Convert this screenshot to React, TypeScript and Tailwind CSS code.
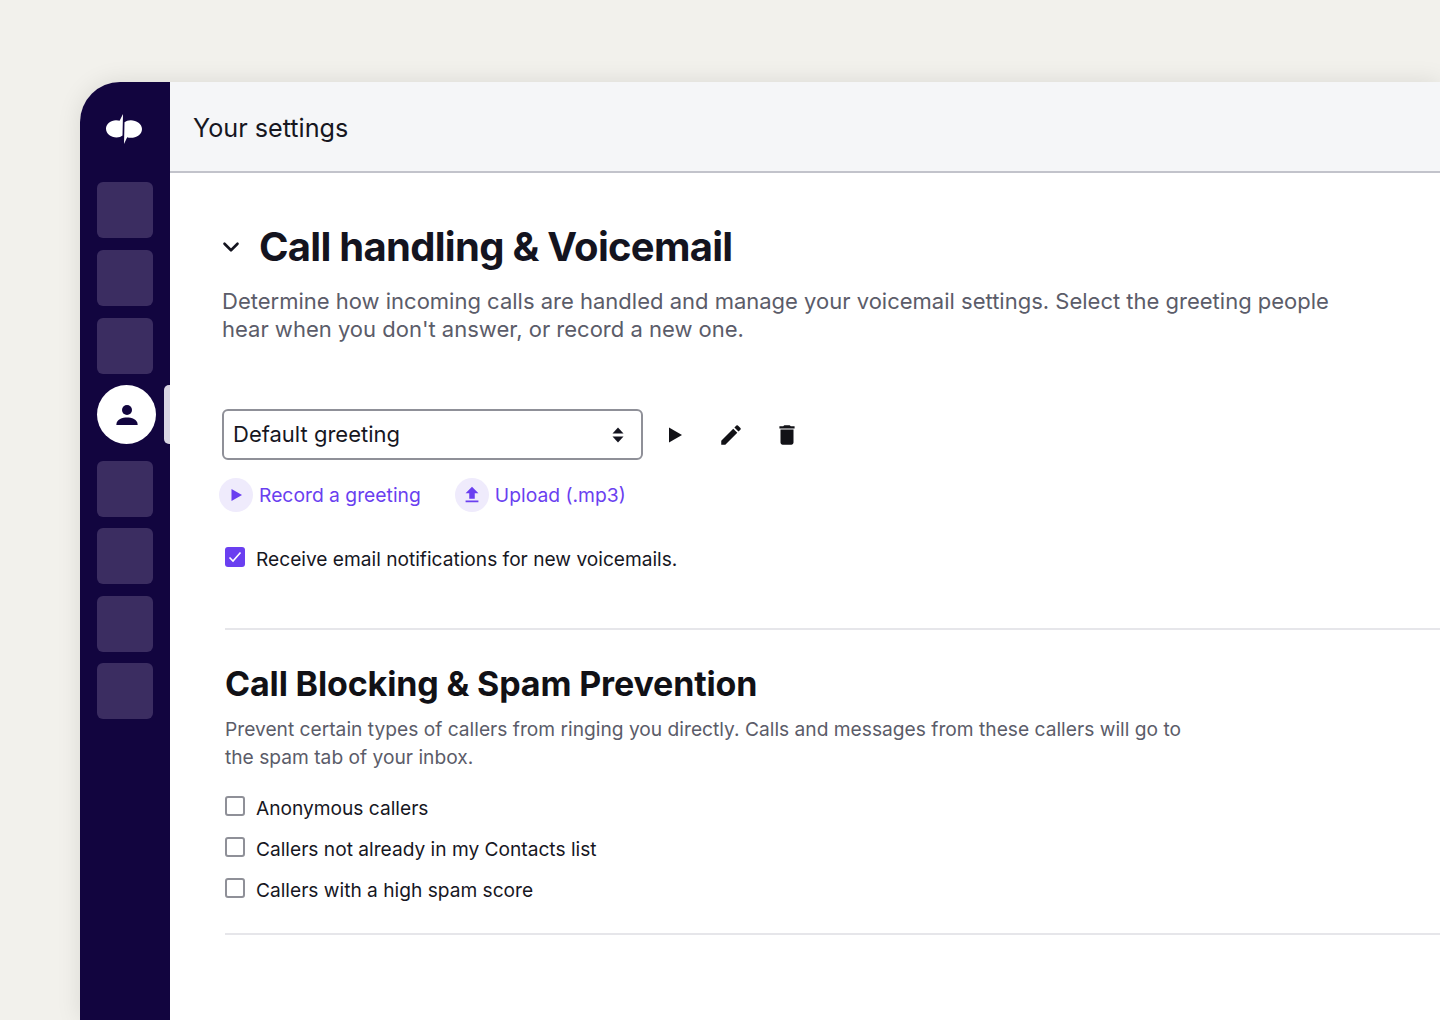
import React from 'react';
import { ChevronDown } from 'lucide-react';

const NavTile = () => <div className="w-[56px] h-[56px] rounded-[6px] bg-[#3b2d61]" />;

const Logo = () => (
  <svg width="38" height="32" viewBox="0 0 38 32" fill="#ffffff">
    <path d="M18 1 L17.5 22.5 C16 23.8 14.2 24.5 11.5 24.5 C6 24.5 1 21 1 15.8 C1 10.8 5.6 7.2 11 7.2 C12.6 7.2 13.8 7.5 14.6 7.8 Z" />
    <path d="M19 31 L19.5 9.2 C21.2 7.9 23 7.2 25.8 7.2 C31.5 7.2 37 10.8 37 16 C37 21.4 31.5 24.8 25.8 24.8 C24.4 24.8 23.2 24.6 22.2 24.2 Z" />
  </svg>
);

const CheckBox = ({ checked = false }: { checked?: boolean }) =>
  checked ? (
    <div className="w-[20px] h-[20px] rounded-[3px] bg-[#6a3ff0] flex items-center justify-center">
      <svg width="16" height="16" viewBox="0 0 16 16" fill="none" stroke="#ffffff" strokeWidth="1.6">
        <path d="M2.5 8.5 L6 12 L13.5 3.5" />
      </svg>
    </div>
  ) : (
    <div className="w-[20px] h-[20px] rounded-[3px] border-2 border-[#8f9098] bg-white" />
  );

const CheckRow = ({ label, checked }: { label: string; checked?: boolean }) => (
  <div className="flex items-center gap-[11px] h-[24px]">
    <CheckBox checked={checked} />
    <span className="text-[19.15px] leading-[24px] text-[#17171f] mt-[4px]">{label}</span>
  </div>
);

export default function App() {
  return (
    <div className="h-[1020px] w-[1440px] overflow-hidden bg-[#f2f1ec] pt-[82px] pl-[80px] font-['Inter',sans-serif]">
      <div className="flex h-[938px] rounded-tl-[40px] overflow-hidden shadow-[0_0_24px_rgba(0,0,0,0.10)]">
        {/* Sidebar */}
        <div className="w-[90px] shrink-0 bg-[#12053f] flex flex-col relative">
          <div className="h-[100px] flex items-center justify-center pr-[2px] pb-[7px] w-full">
            <Logo />
          </div>
          <div className="flex flex-col gap-[12px] pl-[17px]">
            <NavTile />
            <NavTile />
            <NavTile />
          </div>
          <div className="ml-[17px] mt-[11px] w-[59px] h-[59px] rounded-full bg-white flex items-center justify-center">
            <svg width="30" height="30" viewBox="0 0 24 24" fill="#12053f">
              <circle cx="12" cy="8" r="4" />
              <path d="M3.5 19.5 C3.5 15.5 8.5 14 12 14 C15.5 14 20.5 15.5 20.5 19.5 V20 H3.5 Z" />
            </svg>
          </div>
          <div className="mt-[17px] flex flex-col gap-[11.4px] pl-[17px]">
            <NavTile />
            <NavTile />
            <NavTile />
            <NavTile />
          </div>
          <div className="absolute right-0 top-[303px] w-[6px] h-[59px] rounded-l-[5px] bg-[#d9d6e3]" />
        </div>

        {/* Main */}
        <div className="flex-1 bg-white min-w-0">
          <div className="h-[91px] bg-[#f5f6f8] border-b-[2px] border-[#c2c3cb] flex items-center pl-[23px]">
            <span className="text-[25.2px] text-[#17171f] mt-[4px]">Your settings</span>
          </div>

          <div className="pl-[52px] pt-[47px]">
            <div className="flex items-center h-[54px]">
              <ChevronDown className="w-[26px] h-[26px] text-[#14141f] ml-[-4px]" strokeWidth={2.4} />
              <h1 className="ml-[15px] text-[40px] leading-[54px] font-bold tracking-[-0.72px] text-[#14141f]">Call handling &amp; Voicemail</h1>
            </div>
            <p className="mt-[13px] w-[1130px] text-[22px] leading-[28px] text-[#5b5c69]">
              Determine how incoming calls are handled and manage your voicemail settings. Select the greeting people hear when you don't answer, or record a new one.
            </p>

            <div className="mt-[66px] flex items-center">
              <div className="w-[421px] h-[51px] rounded-[6px] border-2 border-[#8f9098] flex items-center justify-between pl-[9px] pr-[16px]">
                <span className="text-[22px] text-[#17171f]">Default greeting</span>
                <svg width="14" height="18" viewBox="0 0 14 18" fill="#14141f">
                  <path d="M7 1.5 L12.5 7.5 H1.5 Z" />
                  <path d="M7 16.5 L12.5 10.5 H1.5 Z" />
                </svg>
              </div>
              <svg className="ml-[20px]" width="24" height="24" viewBox="0 0 24 24" fill="#111116">
                <path d="M6 4.5 L19 12 L6 19.5 Z" />
              </svg>
              <svg className="ml-[31px]" width="26" height="26" viewBox="0 0 24 24" fill="#111116">
                <path d="M3 17.25V21h3.75L17.81 9.94l-3.75-3.75L3 17.25zM20.71 7.04a1 1 0 0 0 0-1.41l-2.34-2.34a1 1 0 0 0-1.41 0l-1.83 1.83 3.75 3.75 1.83-1.83z" />
              </svg>
              <svg className="ml-[30px]" width="26" height="26" viewBox="0 0 24 24" fill="#111116">
                <path d="M6 19c0 1.1.9 2 2 2h8c1.1 0 2-.9 2-2V7H6v12zM19 4h-3.5l-1-1h-5l-1 1H5v2h14V4z" />
              </svg>
            </div>

            <div className="mt-[18px] ml-[-3px] flex items-center">
              <div className="w-[34px] h-[34px] rounded-full bg-[#efebfc] flex items-center justify-center">
                <svg width="18" height="18" viewBox="0 0 18 18" fill="#6a3ff0">
                  <path d="M4.5 3 L15 9 L4.5 15 Z" />
                </svg>
              </div>
              <span className="ml-[6px] text-[19.3px] text-[#6a3ff0]">Record a greeting</span>
              <div className="ml-[34px] w-[34px] h-[34px] rounded-full bg-[#efebfc] flex items-center justify-center">
                <svg width="22" height="22" viewBox="0 0 24 24" fill="#6a3ff0">
                  <path d="M9 16h6v-6h4l-7-7-7 7h4v6zm-4 2h14v2H5v-2z" />
                </svg>
              </div>
              <span className="ml-[6px] text-[19.3px] text-[#6a3ff0]">Upload (.mp3)</span>
            </div>

            <div className="mt-[33px] ml-[3px]">
              <CheckRow label="Receive email notifications for new voicemails." checked />
            </div>

            <div className="mt-[59px] ml-[3px] border-t-2 border-[#e6e6ea] pt-[30px]">
              <h2 className="text-[34px] leading-[48px] font-bold tracking-[-0.15px] text-[#111116]">Call Blocking &amp; Spam Prevention</h2>
              <p className="mt-[7px] w-[980px] text-[19.2px] leading-[28px] text-[#5b5c69]">
                Prevent certain types of callers from ringing you directly. Calls and messages from these callers will go to the spam tab of your inbox.
              </p>
              <div className="mt-[23px] flex flex-col gap-[17px]">
                <CheckRow label="Anonymous callers" />
                <CheckRow label="Callers not already in my Contacts list" />
                <CheckRow label="Callers with a high spam score" />
              </div>
              <div className="mt-[33px] border-t-2 border-[#e6e6ea]" />
            </div>
          </div>
        </div>
      </div>
    </div>
  );
}
